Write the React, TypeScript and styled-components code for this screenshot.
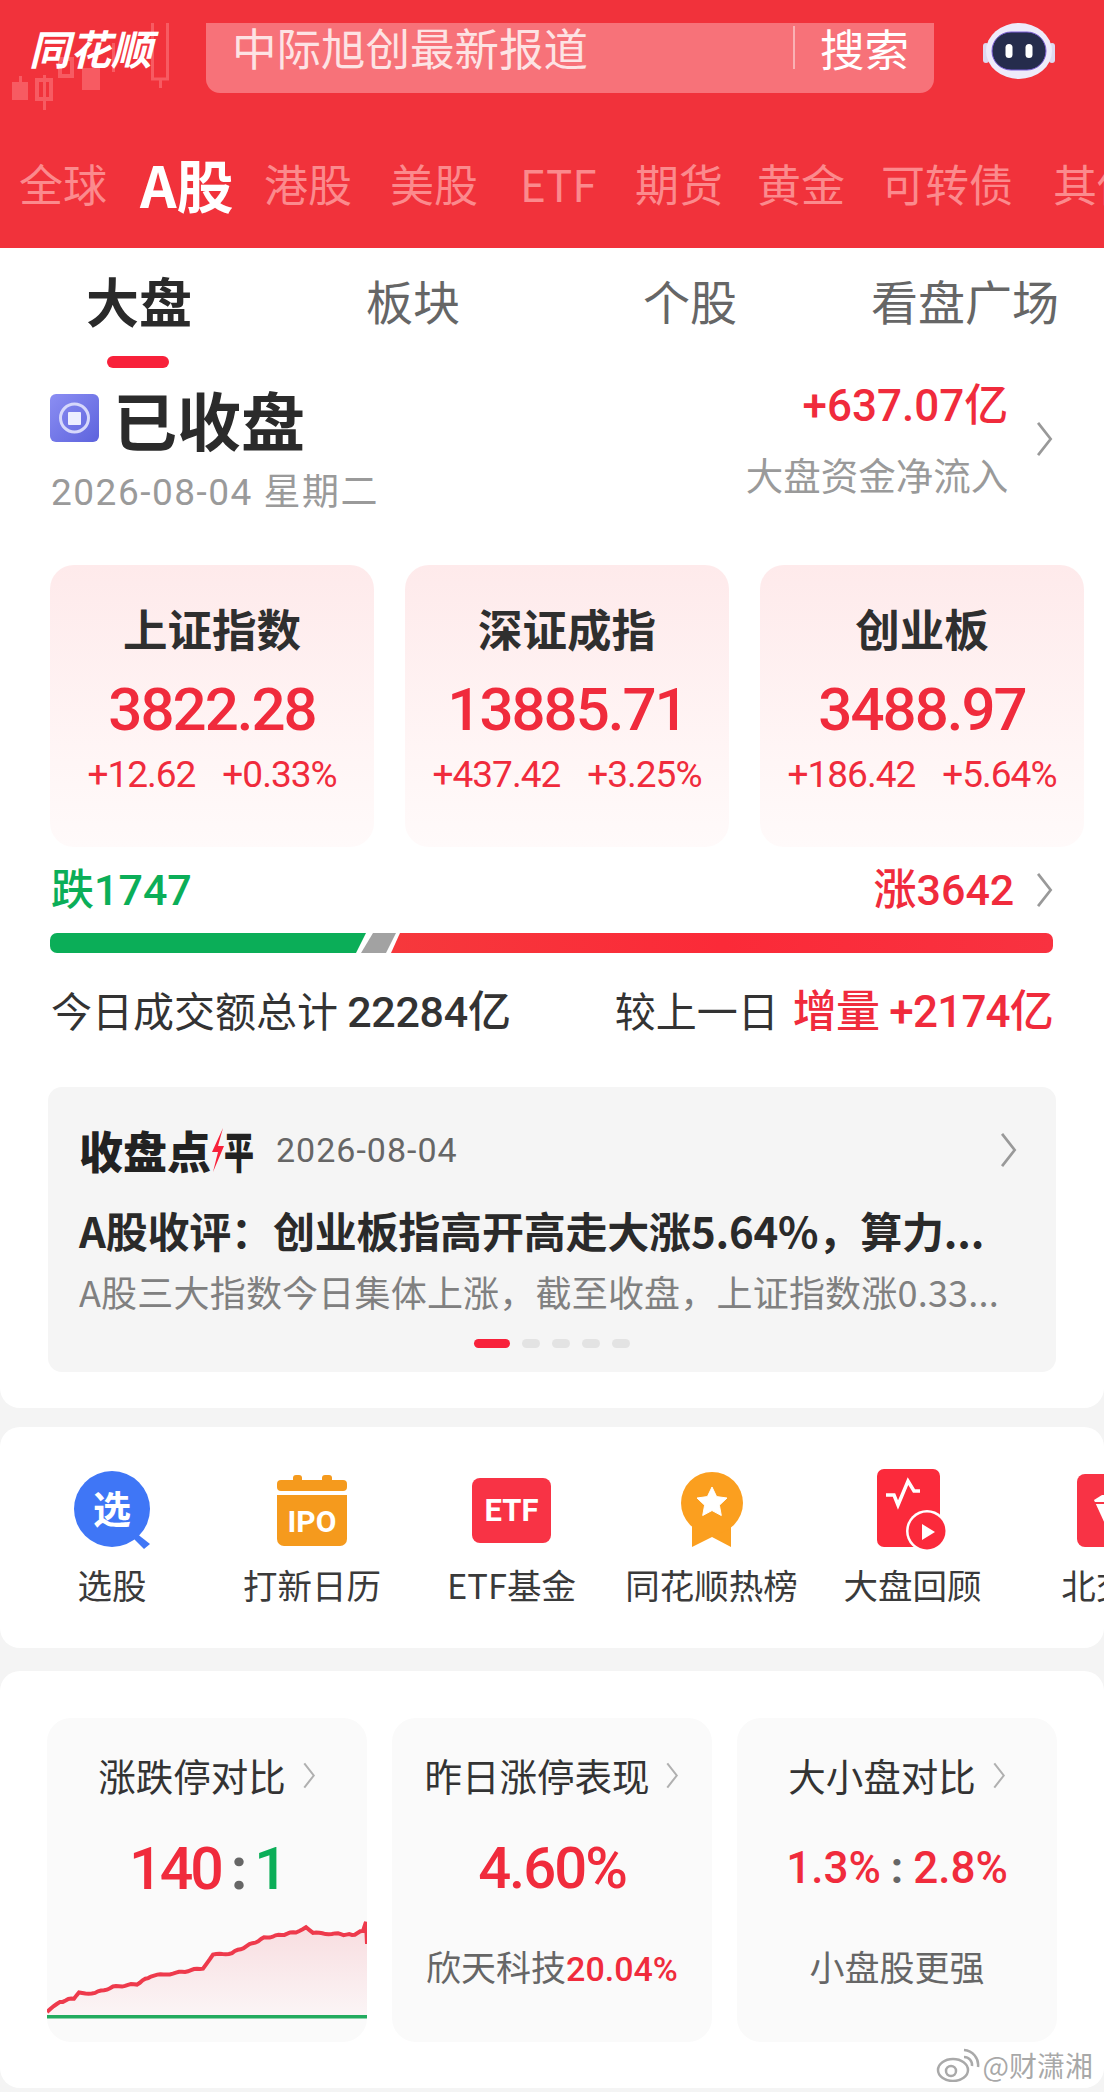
import styled, { createGlobalStyle } from "styled-components";

const RED = "#f1323b";
const UP = "#f02b3c";
const GREEN = "#0bae58";
const FONT = `"Noto Sans CJK SC", "Noto Sans", sans-serif`;
const NUM = `Roboto, "Noto Sans CJK SC", sans-serif`;

const GlobalStyle = createGlobalStyle`
  html, body {
    margin: 0;
    padding: 0;
    background: #f4f4f4;
    font-family: ${FONT};
  }
  * { box-sizing: border-box; }
`;

const Page = styled.div`
  width: 1104px;
  height: 2092px;
  overflow: hidden;
  background: #f4f4f4;
`;

const Header = styled.header`
  height: 248px;
  background: ${RED};
  overflow: hidden;
`;

const TopRow = styled.div`
  display: flex;
  align-items: flex-start;
  padding-top: 23px;
`;

const LogoWrap = styled.div`
  position: relative;
  width: 206px;
  height: 70px;
  flex: none;
  padding: 3px 0 0 29px;
`;

const Candles = styled.svg`
  position: absolute;
  left: 0;
  top: -23px;
`;

const Logo = styled.div`
  position: relative;
  color: #fff;
  font-size: 41px;
  line-height: 42px;
  font-weight: 700;
  font-style: italic;
  white-space: nowrap;
`;

const SearchBox = styled.div`
  width: 728px;
  height: 70px;
  flex: none;
  display: flex;
  align-items: flex-start;
  padding-left: 26px;
  background: #f77279;
  border-radius: 0 0 14px 14px;
`;

const SearchText = styled.span`
  flex: 1;
  color: #fde3e4;
  font-size: 44.5px;
  line-height: 48px;
  white-space: nowrap;
`;

const SearchBtn = styled.span`
  margin: 3px 25px 0 0;
  padding-left: 25px;
  height: 43px;
  border-left: 2px solid #fab1b4;
  color: #fff;
  font-size: 44.5px;
  line-height: 43px;
  white-space: nowrap;
`;

const Robot = styled.svg`
  margin-left: 49px;
  flex: none;
`;

const Tabs = styled.nav`
  display: flex;
  align-items: center;
  height: 80px;
  margin-top: 50px;
  padding-left: 19px;
  white-space: nowrap;
`;

const Tab = styled.span<{ $w: number; $active?: boolean }>`
  flex: none;
  width: ${(p) => p.$w}px;
  color: ${(p) => (p.$active ? "#fff" : "#fb8a8d")};
  font-size: ${(p) => (p.$active ? 57 : 44)}px;
  font-weight: ${(p) => (p.$active ? 700 : 400)};
  line-height: 64px;
`;

const Sheet = styled.section`
  height: 1160px;
  background: #fff;
  border-radius: 0 0 20px 20px;
`;

const SubTabs = styled.div`
  display: flex;
  height: 120px;
  padding-top: 23px;
`;

const SubTab = styled.div<{ $w: number; $active?: boolean }>`
  flex: none;
  width: ${(p) => p.$w}px;
  padding-left: ${(p) => (p.$active ? 86 : 0)}px;
  color: ${(p) => (p.$active ? "#2a2a2a" : "#666")};
  font-size: ${(p) => (p.$active ? 53 : 47)}px;
  font-weight: ${(p) => (p.$active ? 700 : 400)};
  line-height: 58px;
  white-space: nowrap;
`;

const Underline = styled.div`
  width: 62px;
  height: 12px;
  margin: 27px 0 0 21px;
  background: #f8213a;
  border-radius: 6px;
`;

const StatusRow = styled.div`
  display: flex;
  justify-content: space-between;
  align-items: flex-start;
  height: 197px;
  padding: 0 50px 0 50px;
`;

const StatusLeft = styled.div`
  display: flex;
  flex-direction: column;
`;

const StatusTitle = styled.div`
  display: flex;
  align-items: center;
  gap: 14px;
  color: #2b2b2b;
  font-size: 64px;
  font-weight: 700;
  line-height: 88px;
  margin-top: 6px;
`;

const StatusDate = styled.div`
  color: #9a9a9a;
  font-family: ${NUM};
  font-size: 37px;
  line-height: 44px;
  margin: 9px 0 0 1px;
  letter-spacing: 1.5px;
  white-space: nowrap;
`;

const FlowBlock = styled.div`
  display: flex;
  align-items: center;
  gap: 27px;
  margin-top: 13px;
`;

const FlowText = styled.div`
  display: flex;
  flex-direction: column;
  align-items: flex-end;
`;

const FlowValue = styled.div`
  color: ${UP};
  font-family: ${NUM};
  font-size: 44px;
  font-weight: 500;
  line-height: 50px;
  white-space: nowrap;
`;

const FlowLabel = styled.div`
  color: #9a9a9a;
  font-size: 37.5px;
  line-height: 46px;
  margin-top: 20px;
  white-space: nowrap;
`;

const Chevron = styled.svg`
  flex: none;
  display: block;
`;

const IndexGrid = styled.div`
  display: grid;
  grid-template-columns: repeat(3, 324px);
  gap: 31px;
  padding-left: 50px;
`;

const IndexCard = styled.div`
  height: 282px;
  display: flex;
  flex-direction: column;
  align-items: center;
  padding-top: 38px;
  border-radius: 24px;
  background: linear-gradient(180deg, #feeaeb 0%, #fff6f6 70%, #fffafa 100%);
`;

const IndexName = styled.div`
  color: #2f2f2f;
  font-size: 44.5px;
  font-weight: 700;
  line-height: 50px;
  white-space: nowrap;
`;

const IndexValue = styled.div`
  color: ${UP};
  font-family: ${NUM};
  font-size: 60px;
  font-weight: 500;
  line-height: 66px;
  letter-spacing: -2px;
  margin-top: 24px;
  white-space: nowrap;
`;

const IndexDelta = styled.div`
  display: flex;
  gap: 27px;
  color: ${UP};
  font-family: ${NUM};
  font-size: 37px;
  line-height: 40px;
  letter-spacing: -1px;
  margin-top: 12px;
  white-space: nowrap;
`;

const BreadthRow = styled.div`
  display: flex;
  justify-content: space-between;
  align-items: center;
  height: 50px;
  margin-top: 18px;
  padding: 0 50px 0 51px;
`;

const BreadthText = styled.span<{ $color: string }>`
  color: ${(p) => p.$color};
  font-family: ${NUM};
  font-size: 43px;
  font-weight: 500;
  line-height: 50px;
  white-space: nowrap;
`;

const BreadthRight = styled.div`
  display: flex;
  align-items: center;
  gap: 21px;
`;

const BarTrack = styled.div`
  display: flex;
  height: 20px;
  margin: 18px 51px 0 50px;
  border-radius: 7px;
  overflow: hidden;
`;

const FallBar = styled.div`
  flex: none;
  width: 316px;
  background: ${GREEN};
  clip-path: polygon(0 0, 100% 0, calc(100% - 10px) 100%, 0 100%);
`;

const FlatBar = styled.div`
  flex: none;
  width: 35px;
  margin-left: -5px;
  background: #a2a2a2;
  clip-path: polygon(12px 0, 100% 0, calc(100% - 10px) 100%, 0 100%);
`;

const RiseBar = styled.div`
  flex: 1;
  margin-left: -5px;
  background: linear-gradient(90deg, #f6383c, #fb2a38 50%, #f83240);
  clip-path: polygon(9px 0, 100% 0, 100% 100%, 0 100%);
`;

const VolumeRow = styled.div`
  display: flex;
  justify-content: space-between;
  align-items: center;
  height: 56px;
  margin-top: 29px;
  padding: 0 51px 0 51px;
  color: #333;
  font-size: 41px;
  line-height: 56px;
  white-space: nowrap;
`;

const VolumeNum = styled.span`
  font-family: ${NUM};
  font-weight: 500;
  font-size: 43px;
  letter-spacing: -0.3px;
`;

const VolumeUp = styled.span`
  color: ${UP};
  font-family: ${NUM};
  font-weight: 500;
  font-size: 44px;
  letter-spacing: -0.8px;
  margin-left: 14px;
`;

const Review = styled.div`
  position: relative;
  height: 285px;
  margin: 49px 48px 0;
  padding: 35px 38px 0 31px;
  background: #f5f5f5;
  border-radius: 14px;
`;

const ReviewHead = styled.div`
  display: flex;
  align-items: center;
  height: 56px;
`;

const ReviewBrand = styled.div`
  display: flex;
  align-items: center;
  color: #222;
  font-size: 44px;
  font-weight: 900;
  line-height: 56px;
  white-space: nowrap;
`;

const BrandTail = styled.span`
  display: inline-block;
  width: 28px;
  transform: scaleX(0.68);
  transform-origin: left center;
`;

const ReviewDate = styled.div`
  flex: 1;
  margin-left: 24px;
  color: #666;
  font-family: ${NUM};
  font-size: 34px;
  letter-spacing: 1px;
  line-height: 40px;
`;

const ReviewTitle = styled.div`
  margin-top: 25px;
  color: #2a2a2a;
  font-size: 42px;
  font-weight: 700;
  line-height: 54px;
  letter-spacing: -0.2px;
  white-space: nowrap;
`;

const ReviewBody = styled.div`
  margin-top: 11px;
  color: #808080;
  font-size: 36px;
  line-height: 46px;
  letter-spacing: 0.2px;
  white-space: nowrap;
`;

const Dots = styled.div`
  position: absolute;
  left: 426px;
  bottom: 24px;
  display: flex;
  gap: 12px;
`;

const Dot = styled.span<{ $active?: boolean }>`
  width: ${(p) => (p.$active ? 36 : 18)}px;
  height: 9px;
  background: ${(p) => (p.$active ? "#f8213a" : "#e3e3e3")};
  border-radius: 5px;
`;

const Shortcuts = styled.section`
  display: flex;
  height: 221px;
  margin-top: 19px;
  padding: 43px 0 0 12px;
  background: #fff;
  border-radius: 20px;
  overflow: hidden;
`;

const Shortcut = styled.div<{ $w: number }>`
  flex: none;
  width: ${(p) => p.$w}px;
  display: flex;
  flex-direction: column;
  align-items: center;
`;

const IconSlot = styled.div`
  height: 80px;
  display: flex;
  align-items: center;
  justify-content: center;
`;

const ShortcutIcon = styled.svg`
  display: block;
  flex: none;
`;

const ShortcutLabel = styled.div`
  margin-top: 11px;
  color: #3a3a3a;
  font-size: 34.5px;
  line-height: 46px;
  white-space: nowrap;
`;

const Compare = styled.section`
  position: relative;
  height: 417px;
  margin-top: 23px;
  padding: 47px 0 0 47px;
  background: #fff;
  border-radius: 20px;
`;

const CompareGrid = styled.div`
  display: grid;
  grid-template-columns: repeat(3, 320px);
  gap: 25px;
`;

const CompareCard = styled.div`
  position: relative;
  height: 324px;
  display: flex;
  flex-direction: column;
  align-items: center;
  padding-top: 32px;
  background: #fafafa;
  border-radius: 24px;
  overflow: hidden;
`;

const CompareTitle = styled.div`
  display: flex;
  align-items: center;
  gap: 16px;
  color: #333;
  font-size: 37.5px;
  line-height: 50px;
  white-space: nowrap;
`;

const CompareValue = styled.div<{ $size: number; $tight?: number }>`
  height: 70px;
  margin-top: 33px;
  display: flex;
  align-items: center;
  color: ${UP};
  font-family: ${NUM};
  font-size: ${(p) => p.$size}px;
  letter-spacing: ${(p) => p.$tight ?? 0}px;
  font-weight: 500;
  white-space: nowrap;
`;

const Colon = styled.span<{ $gap: number }>`
  color: #666;
  font-weight: 700;
  margin: 0 ${(p) => p.$gap}px;
`;

const Green = styled.span`
  color: ${GREEN};
`;

const CompareNote = styled.div`
  margin-top: 40px;
  color: #666;
  font-size: 35px;
  line-height: 46px;
  white-space: nowrap;
`;

const NoteUp = styled.span`
  color: ${UP};
  font-family: ${NUM};
  font-weight: 500;
  font-size: 34px;
`;

const ChartSvg = styled.svg`
  position: absolute;
  left: 0;
  bottom: 0;
`;

const Watermark = styled.div`
  position: absolute;
  right: 11px;
  bottom: 3px;
  display: flex;
  align-items: center;
  gap: 3px;
  color: rgba(140, 140, 140, 0.75);
  font-size: 28px;
  line-height: 40px;
  white-space: nowrap;
`;

function ChevronRight({ h = 34, color = "#999" }: { h?: number; color?: string }) {
  return (
    <Chevron width={h * 0.52} height={h} viewBox="0 0 10 20" fill="none">
      <path d="M1.5 1 L8.5 10 L1.5 19" stroke={color} strokeWidth="1.5" />
    </Chevron>
  );
}

function CandleBackdrop() {
  return (
    <Candles width="180" height="120" viewBox="0 0 180 120" fill="#f75b62" stroke="none">
      <rect x="12" y="82" width="16" height="18" />
      <rect x="19" y="76" width="3" height="8" />
      <rect x="37" y="80" width="14" height="19" fill="none" stroke="#f75b62" strokeWidth="4" />
      <rect x="43" y="75" width="3" height="35" />
      <rect x="60" y="59" width="12" height="17" fill="none" stroke="#f75b62" strokeWidth="4" />
      <rect x="82" y="68" width="18" height="22" />
      <rect x="112" y="43" width="3" height="29" />
      <path d="M152.5 23 V79 H167.5 V23" fill="none" stroke="#f75b62" strokeWidth="3" />
      <rect x="159" y="79" width="3" height="9" />
    </Candles>
  );
}

function RobotIcon() {
  return (
    <Robot width="72" height="56" viewBox="0 0 72 56">
      <rect x="0" y="20" width="6" height="20" rx="3" fill="#ddd9f0" />
      <rect x="66" y="20" width="6" height="20" rx="3" fill="#ddd9f0" />
      <ellipse cx="36" cy="28" rx="33" ry="28" fill="#eeebfa" />
      <rect x="9" y="9" width="54" height="38" rx="19" fill="#252c4c" stroke="#7d5fd8" strokeWidth="1" />
      <rect x="22.5" y="21" width="7" height="14" rx="3.5" fill="#fff" />
      <rect x="42.5" y="21" width="7" height="14" rx="3.5" fill="#fff" />
    </Robot>
  );
}

function StopBadge() {
  return (
    <svg width="49" height="48" viewBox="0 0 49 48">
      <defs>
        <linearGradient id="stopBg" x1="0" y1="0" x2="1" y2="1">
          <stop offset="0" stopColor="#8b8ef3" />
          <stop offset="1" stopColor="#5d63dd" />
        </linearGradient>
      </defs>
      <rect width="49" height="48" rx="6" fill="url(#stopBg)" />
      <circle cx="24.5" cy="24" r="14" fill="none" stroke="#d6d8fb" strokeWidth="3" />
      <rect x="18" y="18" width="13" height="13" rx="1" fill="#eceeff" />
    </svg>
  );
}

function BrandBolt() {
  return (
    <svg width="13" height="44" viewBox="0 0 13 44">
      <path d="M12 0 L1 24 L7 24 L2 44 L13 18 L7 18 Z" fill="#f8213a" />
    </svg>
  );
}

function PickIcon() {
  return (
    <ShortcutIcon width="77" height="78" viewBox="0 0 77 78">
      <path d="M62 62 L76 73 L70 78 L58 66 Z" fill="#3f76f6" />
      <circle cx="38" cy="38" r="38" fill="#3f76f6" />
      <text x="38" y="52" textAnchor="middle" fontSize="38" fontWeight="700" fill="#fff" fontFamily={FONT}>
        选
      </text>
    </ShortcutIcon>
  );
}

function IpoIcon() {
  return (
    <ShortcutIcon width="70" height="71" viewBox="0 0 70 71">
      <rect x="16" y="0" width="9" height="10" rx="3" fill="#f59a1d" />
      <rect x="45" y="0" width="10" height="10" rx="3" fill="#f59a1d" />
      <rect x="0" y="5" width="70" height="11" rx="4" fill="#f59a1d" />
      <path d="M0 20 H70 V64 a7 7 0 0 1 -7 7 H7 a7 7 0 0 1 -7 -7 Z" fill="#f59a1d" />
      <text x="35" y="57" textAnchor="middle" fontSize="30" fontWeight="700" fill="#fff" fontFamily={NUM}>
        IPO
      </text>
    </ShortcutIcon>
  );
}

function EtfIcon() {
  return (
    <ShortcutIcon width="79" height="65" viewBox="0 0 79 65">
      <rect width="79" height="65" rx="8" fill="#f83345" />
      <text x="39.5" y="43" textAnchor="middle" fontSize="31" fontWeight="700" fill="#fff" fontFamily={NUM}>
        ETF
      </text>
    </ShortcutIcon>
  );
}

function HotIcon() {
  return (
    <ShortcutIcon width="64" height="76" viewBox="0 0 64 76">
      <path d="M12 50 L12 75 L32 65 L51 75 L51 50 Z" fill="#fb9f1f" />
      <circle cx="32" cy="31" r="31" fill="#fb9f1f" />
      <path
        d="M32 15 L36.6 24.6 L47 26 L39.4 33.2 L41.3 43.5 L32 38.5 L22.7 43.5 L24.6 33.2 L17 26 L27.4 24.6 Z"
        fill="#fff"
        stroke="#fff"
        strokeWidth="1"
        strokeLinejoin="round"
      />
    </ShortcutIcon>
  );
}

function ReplayIcon() {
  return (
    <ShortcutIcon width="72" height="84" viewBox="0 0 72 84">
      <rect x="0" y="1" width="63" height="78" rx="7" fill="#fb2a3b" />
      <path d="M9 27 L17 27 L21 37 L31 13 L37 23 L43 23" fill="none" stroke="#fff" strokeWidth="3.5" />
      <circle cx="50" cy="63" r="21" fill="#fff" />
      <circle cx="50" cy="63" r="18.5" fill="#fb2a3b" />
      <path d="M45 56 L58 64 L45 72 Z" fill="#fff" />
    </ShortcutIcon>
  );
}

function BeijingIcon() {
  return (
    <ShortcutIcon width="73" height="73" viewBox="0 0 73 73">
      <rect width="73" height="73" rx="8" fill="#f83345" />
      <path d="M17 26 L25 21 L41 21 L49 26 L29 52 Z" fill="#fff" />
      <path d="M17 29 H49" stroke="#f83345" strokeWidth="2" />
    </ShortcutIcon>
  );
}

// 图表折线：按关键点插值，再叠一点抖动
const chartKeys: [number, number][] = [
  [0, 100], [13, 90], [27, 86], [32, 81], [48, 81], [66, 75], [90, 72], [104, 64],
  [129, 61], [156, 56], [166, 43], [185, 41], [217, 26], [249, 20], [259, 15],
  [266, 21], [291, 22], [305, 23], [316, 19],
];

function buildChartLine() {
  const pts: string[] = [];
  for (let i = 0; i < chartKeys.length - 1; i++) {
    const [x0, y0] = chartKeys[i];
    const [x1, y1] = chartKeys[i + 1];
    const steps = Math.max(1, Math.round((x1 - x0) / 3));
    for (let s = 0; s < steps; s++) {
      const t = s / steps;
      const x = x0 + (x1 - x0) * t;
      const y = y0 + (y1 - y0) * t + Math.sin(x * 1.7) * 0.7;
      pts.push(`${x.toFixed(1)} ${y.toFixed(1)}`);
    }
  }
  pts.push("316 19", "319 10", "320 32");
  return "M" + pts.join(" L");
}

const chartLine = buildChartLine();

function LimitChart() {
  return (
    <ChartSvg width="320" height="130" viewBox="0 0 320 130">
      <defs>
        <linearGradient id="limitFill" x1="0" y1="0" x2="0" y2="1">
          <stop offset="0" stopColor="#f8dcdf" />
          <stop offset="1" stopColor="#fbf5f6" />
        </linearGradient>
      </defs>
      <path d={`${chartLine} L320 104 L0 104 Z`} fill="url(#limitFill)" />
      <path d={chartLine} fill="none" stroke="#ee3a4c" strokeWidth="4" />
      <rect x="0" y="103" width="320" height="3.5" fill="#23ab5f" />
    </ChartSvg>
  );
}

function WeiboIcon() {
  return (
    <svg width="44" height="34" viewBox="0 0 44 34" fill="none" stroke="rgba(140,140,140,0.75)" strokeWidth="2.5">
      <ellipse cx="17" cy="22" rx="15" ry="11" />
      <circle cx="15" cy="23" r="5" />
      <path d="M28 9 a8 8 0 0 1 8 9" />
      <path d="M28 2 a15 15 0 0 1 14 17" />
    </svg>
  );
}

const marketTabs = [
  { label: "全球", w: 121 },
  { label: "A股", w: 124, active: true },
  { label: "港股", w: 126 },
  { label: "美股", w: 130 },
  { label: "ETF", w: 115 },
  { label: "期货", w: 122 },
  { label: "黄金", w: 124 },
  { label: "可转债", w: 172 },
  { label: "其他", w: 100 },
];

const indices = [
  { name: "上证指数", value: "3822.28", diff: "+12.62", pct: "+0.33%" },
  { name: "深证成指", value: "13885.71", diff: "+437.42", pct: "+3.25%" },
  { name: "创业板", value: "3488.97", diff: "+186.42", pct: "+5.64%" },
];

const shortcuts = [
  { label: "选股", w: 200, icon: <PickIcon /> },
  { label: "打新日历", w: 200, icon: <IpoIcon /> },
  { label: "ETF基金", w: 199, icon: <EtfIcon /> },
  { label: "同花顺热榜", w: 201, icon: <HotIcon /> },
  { label: "大盘回顾", w: 201, icon: <ReplayIcon /> },
  { label: "北交所", w: 200, icon: <BeijingIcon /> },
];

export default function App() {
  return (
    <Page>
      <GlobalStyle />
      <Header>
        <TopRow>
          <LogoWrap>
            <CandleBackdrop />
            <Logo>同花顺</Logo>
          </LogoWrap>
          <SearchBox>
            <SearchText>中际旭创最新报道</SearchText>
            <SearchBtn>搜索</SearchBtn>
          </SearchBox>
          <RobotIcon />
        </TopRow>
        <Tabs>
          {marketTabs.map((t) => (
            <Tab key={t.label} $w={t.w} $active={t.active}>
              {t.label}
            </Tab>
          ))}
        </Tabs>
      </Header>

      <Sheet>
        <SubTabs>
          <SubTab $w={366} $active>
            大盘
            <Underline />
          </SubTab>
          <SubTab $w={277}>板块</SubTab>
          <SubTab $w={228}>个股</SubTab>
          <SubTab $w={233}>看盘广场</SubTab>
        </SubTabs>

        <StatusRow>
          <StatusLeft>
            <StatusTitle>
              <StopBadge />
              已收盘
            </StatusTitle>
            <StatusDate>2026-08-04 星期二</StatusDate>
          </StatusLeft>
          <FlowBlock>
            <FlowText>
              <FlowValue>+637.07亿</FlowValue>
              <FlowLabel>大盘资金净流入</FlowLabel>
            </FlowText>
            <ChevronRight h={36} />
          </FlowBlock>
        </StatusRow>

        <IndexGrid>
          {indices.map((i) => (
            <IndexCard key={i.name}>
              <IndexName>{i.name}</IndexName>
              <IndexValue>{i.value}</IndexValue>
              <IndexDelta>
                <span>{i.diff}</span>
                <span>{i.pct}</span>
              </IndexDelta>
            </IndexCard>
          ))}
        </IndexGrid>

        <BreadthRow>
          <BreadthText $color={GREEN}>跌1747</BreadthText>
          <BreadthRight>
            <BreadthText $color={UP}>涨3642</BreadthText>
            <ChevronRight h={36} />
          </BreadthRight>
        </BreadthRow>

        <BarTrack>
          <FallBar />
          <FlatBar />
          <RiseBar />
        </BarTrack>

        <VolumeRow>
          <span>
            今日成交额总计 <VolumeNum>22284亿</VolumeNum>
          </span>
          <span>
            较上一日
            <VolumeUp>增量 +2174亿</VolumeUp>
          </span>
        </VolumeRow>

        <Review>
          <ReviewHead>
            <ReviewBrand>
              收盘点
              <BrandBolt />
              <BrandTail>平</BrandTail>
            </ReviewBrand>
            <ReviewDate>2026-08-04</ReviewDate>
            <ChevronRight h={36} />
          </ReviewHead>
          <ReviewTitle>A股收评：创业板指高开高走大涨5.64%，算力...</ReviewTitle>
          <ReviewBody>A股三大指数今日集体上涨，截至收盘，上证指数涨0.33...</ReviewBody>
          <Dots>
            <Dot $active />
            <Dot />
            <Dot />
            <Dot />
            <Dot />
          </Dots>
        </Review>
      </Sheet>

      <Shortcuts>
        {shortcuts.map((s) => (
          <Shortcut key={s.label} $w={s.w}>
            <IconSlot>{s.icon}</IconSlot>
            <ShortcutLabel>{s.label}</ShortcutLabel>
          </Shortcut>
        ))}
      </Shortcuts>

      <Compare>
        <CompareGrid>
          <CompareCard>
            <CompareTitle>
              涨跌停对比
              <ChevronRight h={27} color="#b0b0b0" />
            </CompareTitle>
            <CompareValue $size={59} $tight={-3}>
              140<Colon $gap={10}>:</Colon>
              <Green>1</Green>
            </CompareValue>
            <LimitChart />
          </CompareCard>
          <CompareCard>
            <CompareTitle>
              昨日涨停表现
              <ChevronRight h={27} color="#b0b0b0" />
            </CompareTitle>
            <CompareValue $size={58} $tight={-2}>
              4.60%
            </CompareValue>
            <CompareNote>
              欣天科技<NoteUp>20.04%</NoteUp>
            </CompareNote>
          </CompareCard>
          <CompareCard>
            <CompareTitle>
              大小盘对比
              <ChevronRight h={27} color="#b0b0b0" />
            </CompareTitle>
            <CompareValue $size={44}>
              1.3%<Colon $gap={10}>:</Colon>2.8%
            </CompareValue>
            <CompareNote>小盘股更强</CompareNote>
          </CompareCard>
        </CompareGrid>
        <Watermark>
          <WeiboIcon />
          @财潇湘
        </Watermark>
      </Compare>
    </Page>
  );
}
